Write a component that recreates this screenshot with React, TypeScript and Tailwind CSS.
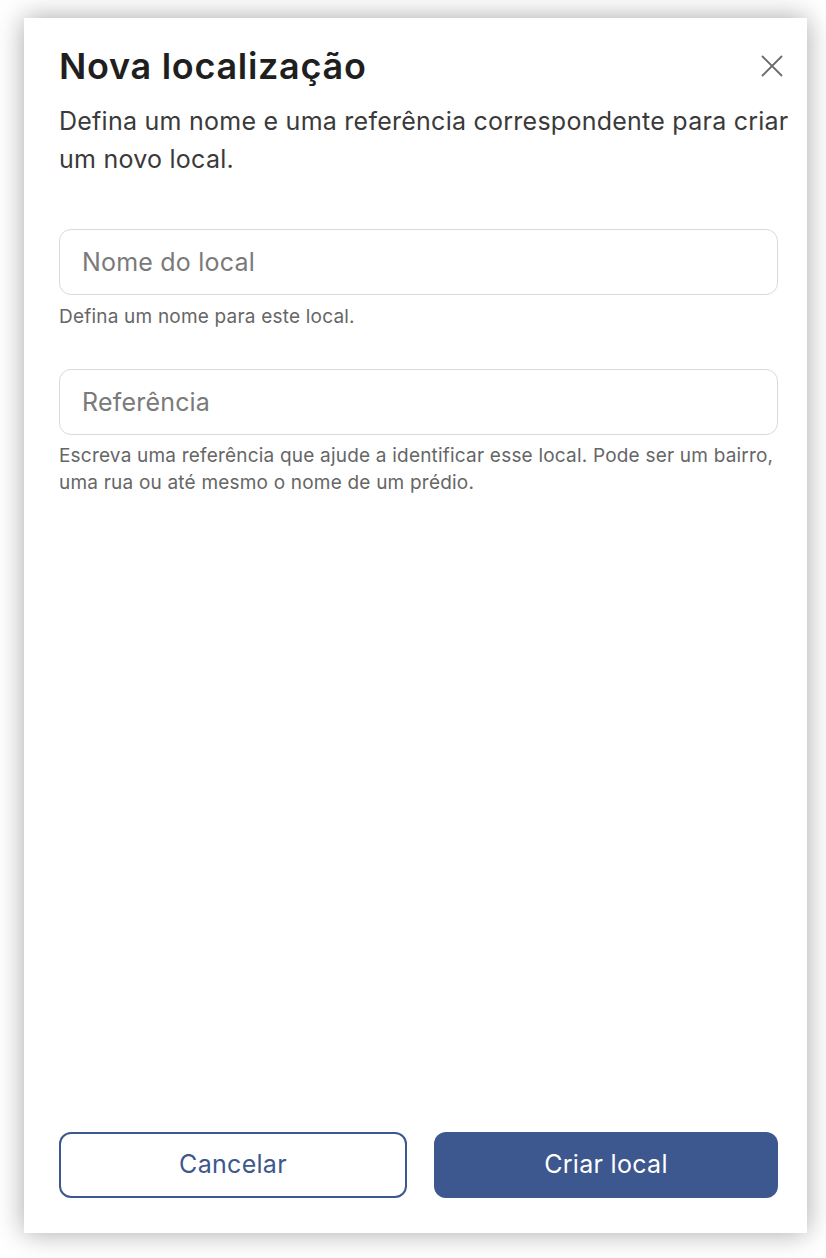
export default function App() {
    return (
        <div className="min-h-[1258px] bg-white pt-[18px] pl-[24px] font-['Inter',sans-serif]">
            {/* Dialog panel */}
            <div className="w-[783px] h-[1215px] bg-white shadow-[0_0_26px_rgba(0,0,0,0.35)] flex flex-col pl-[35px] pr-[29px]">
                {/* Header */}
                <div className="flex items-start justify-between pt-[25px]">
                    <h1 className="text-[36px] leading-[46px] font-semibold text-[#1f1f1f] tracking-[0.7px]">
                        Nova localização
                    </h1>
                    <button className="mt-[12px] mr-[-5px] text-[#6b6b6b]">
                        <svg width="22" height="22" viewBox="0 0 22 22" fill="none" stroke="currentColor" strokeWidth="1.8">
                            <path d="M1 1L21 21M21 1L1 21" />
                        </svg>
                    </button>
                </div>
                <p className="mt-[13px] text-[25px] leading-[38px] text-[#3a3a3a] tracking-[0.25px] mr-[-20px]">
                    Defina um nome e uma referência correspondente para criar um novo local.
                </p>

                {/* Fields */}
                <div className="mt-[51px] flex flex-col">
                    <input
                        placeholder="Nome do local"
                        className="h-[66px] w-full rounded-[12px] border border-[#d9d9d9] px-[22px] text-[25px] tracking-[0.2px] placeholder:text-[#7a7a7a] outline-none"
                    />
                    <span className="mt-[8px] text-[19px] leading-[27px] tracking-[0.2px] text-[#666]">
                        Defina um nome para este local.
                    </span>

                    <input
                        placeholder="Referência"
                        className="mt-[39px] h-[66px] w-full rounded-[12px] border border-[#d9d9d9] px-[22px] text-[25px] tracking-[0.2px] placeholder:text-[#7a7a7a] outline-none"
                    />
                    <span className="mt-[7px] text-[19px] leading-[27px] tracking-[0.2px] text-[#666]">
                        Escreva uma referência que ajude a identificar esse local. Pode ser um bairro, uma rua ou até mesmo o nome de um prédio.
                    </span>
                </div>

                {/* Actions */}
                <div className="mt-auto mb-[35px] flex gap-[27px]">
                    <button className="w-[348px] h-[66px] rounded-[12px] border-2 border-[#3d578f] text-[#3d578f] text-[25px] tracking-[0.3px]">
                        Cancelar
                    </button>
                    <button className="flex-1 h-[66px] rounded-[12px] bg-[#3d578f] text-white text-[25px] tracking-[0.3px]">
                        Criar local
                    </button>
                </div>
            </div>
        </div>
    );
}
